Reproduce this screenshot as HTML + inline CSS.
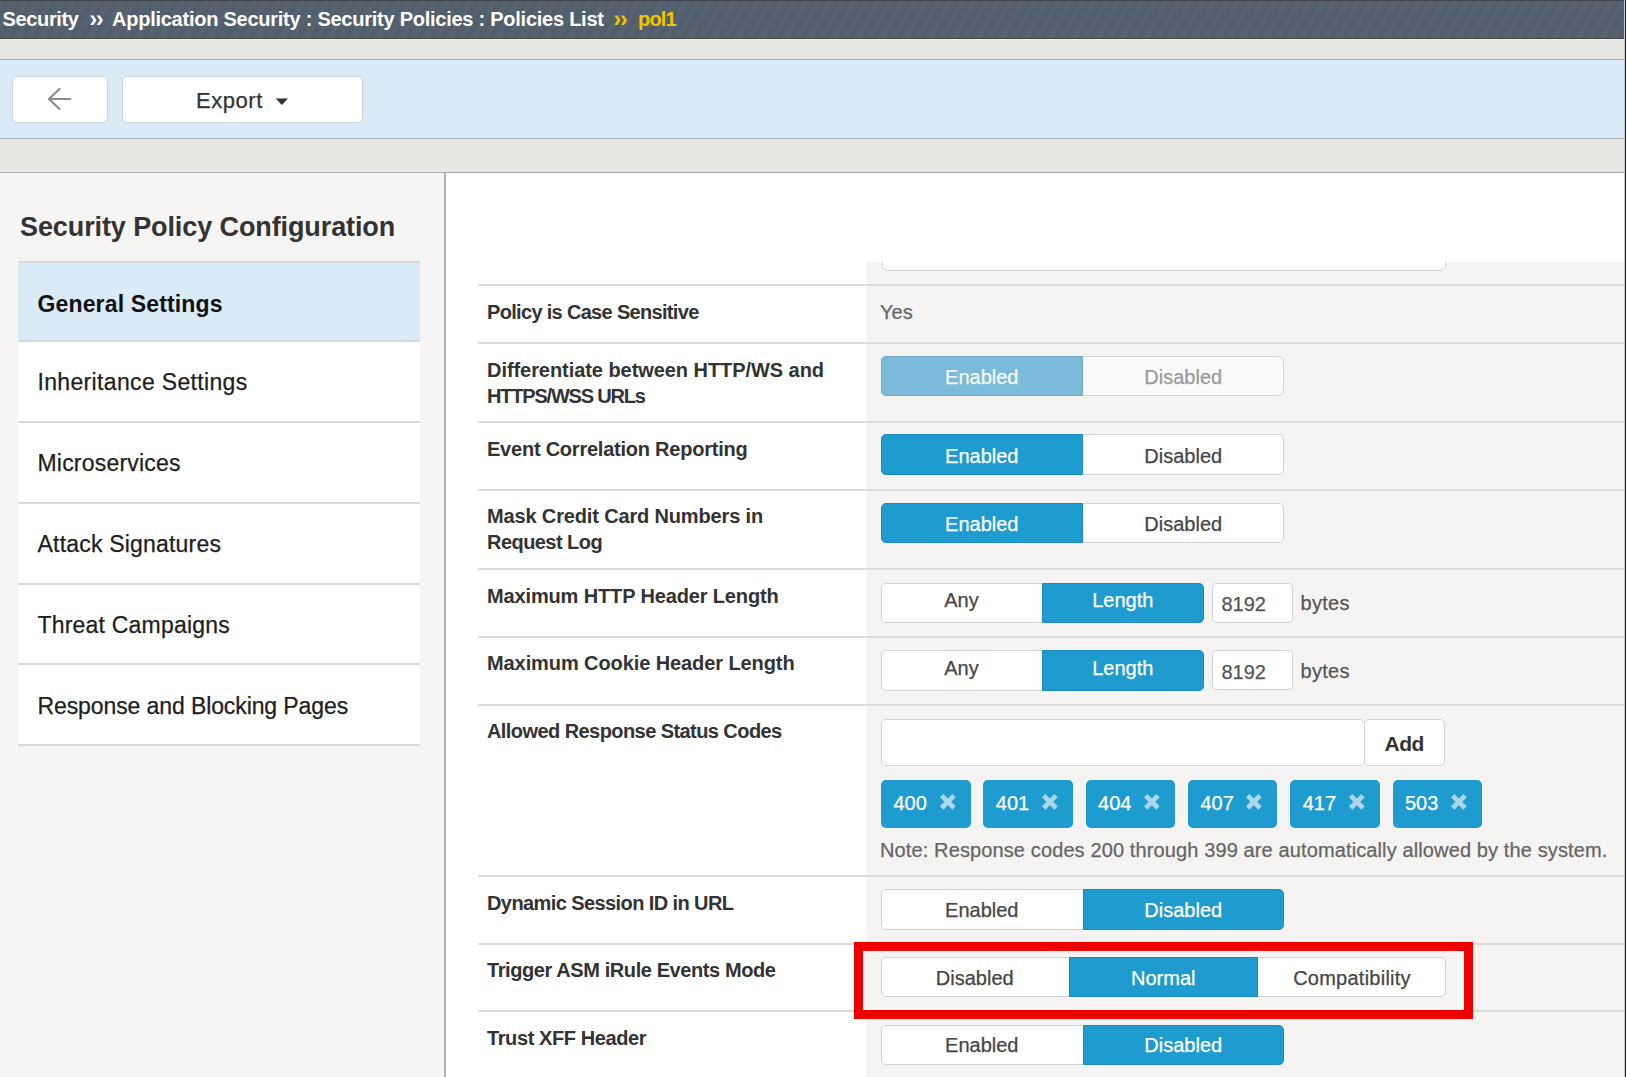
<!DOCTYPE html>
<html><head><meta charset="utf-8"><style>
html,body{margin:0;padding:0;}
body{width:1626px;height:1077px;overflow:hidden;position:relative;background:#fff;font-family:"Liberation Sans",sans-serif;}
.t{position:absolute;white-space:nowrap;line-height:1;}
.r{-webkit-text-stroke:0.25px currentColor;}
.b{position:absolute;box-sizing:border-box;}
</style></head><body>
<div class="b" style="left:0px;top:0px;width:1626.00px;height:39.00px;background:#525e6a;background-image:repeating-linear-gradient(120deg,rgba(255,255,255,0.028) 0px,rgba(255,255,255,0.028) 4px,rgba(0,0,0,0) 5px,rgba(0,0,0,0) 9.4px,rgba(255,255,255,0.028) 10.4px);border-top:1px solid #40464c;border-bottom:1.5px solid #3f4347;"></div>
<div class="t" style="left:2.5px;top:8.67px;font-size:20px;color:#fff;font-weight:700;letter-spacing:-0.35px;">Security</div>
<div class="t" style="left:89.5px;top:7.73px;font-size:23px;color:#fff;font-weight:700;letter-spacing:-1.2px;">&rsaquo;&rsaquo;</div>
<div class="t" id="bc2" style="left:112px;top:8.67px;font-size:20px;color:#fff;font-weight:700;letter-spacing:-0.25px;">Application Security : Security Policies : Policies List</div>
<div class="t" style="left:613.5px;top:7.73px;font-size:23px;color:#f5c400;font-weight:700;letter-spacing:-1.2px;">&rsaquo;&rsaquo;</div>
<div class="t" id="pol1" style="left:638px;top:8.67px;font-size:20px;color:#f5c400;font-weight:700;letter-spacing:-0.8px;">pol1</div>
<div class="b" style="left:0px;top:39px;width:1626.00px;height:21.00px;background:#e8e7e3;border-top:1px solid #f2f1ee;border-bottom:1.5px solid #a9aaab;"></div>
<div class="b" style="left:0px;top:60px;width:1626.00px;height:79.00px;background:#dbebf5;border-bottom:1.5px solid #a9b1b6;"></div>
<div class="b" style="left:11.5px;top:75.5px;width:96.00px;height:47.00px;background:#fff;border:1.5px solid #d2d4d6;border-radius:5px;"></div>
<svg class="b" style="left:40px;top:80px;" width="40" height="40" viewBox="0 0 40 40"><path d="M19.5 9 L9 19 L19.5 29 M9.3 19 L30.2 19" fill="none" stroke="#8c8c8c" stroke-width="2.2" stroke-linecap="round" stroke-linejoin="round"/></svg>
<div class="b" style="left:121.5px;top:75.5px;width:241.00px;height:47.00px;background:#fff;border:1.5px solid #d2d4d6;border-radius:5px;"></div>
<div class="t r" id="export" style="left:196px;top:89.68px;font-size:22px;color:#333;font-weight:400;letter-spacing:0.55px;">Export</div>
<svg class="b" style="left:274px;top:97px;" width="16" height="10" viewBox="0 0 16 10"><path d="M1.8 1.5 L14 1.5 L7.9 8 Z" fill="#333"/></svg>
<div class="b" style="left:0px;top:139px;width:1626.00px;height:34.00px;background:#e8e7e3;border-bottom:1.5px solid #a9aaab;"></div>
<div class="b" style="left:0px;top:173px;width:446.00px;height:904.00px;background:#f6f5f3;border-right:2px solid #b4b4b4;"></div>
<div class="t" id="spc" style="left:20px;top:213.74px;font-size:27px;color:#333;font-weight:700;letter-spacing:-0.1px;">Security Policy Configuration</div>
<div class="b" style="left:18px;top:262.15px;width:402.00px;height:78.90px;background:#dbebf5;"></div>
<div class="b" style="left:18px;top:341.05px;width:402.00px;height:80.95px;background:#fff;"></div>
<div class="b" style="left:18px;top:422px;width:402.00px;height:80.75px;background:#fff;"></div>
<div class="b" style="left:18px;top:502.75px;width:402.00px;height:80.75px;background:#fff;"></div>
<div class="b" style="left:18px;top:583.5px;width:402.00px;height:80.75px;background:#fff;"></div>
<div class="b" style="left:18px;top:664.25px;width:402.00px;height:80.75px;background:#fff;"></div>
<div class="b" style="left:18px;top:261.15px;width:402.00px;height:2.00px;background:#d8d9db;"></div>
<div class="b" style="left:18px;top:340.05px;width:402.00px;height:2.00px;background:#d8d9db;"></div>
<div class="b" style="left:18px;top:421px;width:402.00px;height:2.00px;background:#d8d9db;"></div>
<div class="b" style="left:18px;top:501.75px;width:402.00px;height:2.00px;background:#d8d9db;"></div>
<div class="b" style="left:18px;top:582.5px;width:402.00px;height:2.00px;background:#d8d9db;"></div>
<div class="b" style="left:18px;top:663.25px;width:402.00px;height:2.00px;background:#d8d9db;"></div>
<div class="b" style="left:18px;top:744px;width:402.00px;height:2.00px;background:#d8d9db;"></div>
<div class="t" id="nav0" style="left:37.5px;top:292.88px;font-size:23px;color:#111;font-weight:700;letter-spacing:0.15px;">General Settings</div>
<div class="t r" id="nav1" style="left:37.5px;top:371.38px;font-size:23px;color:#1e1e1e;font-weight:400;letter-spacing:0.34px;">Inheritance Settings</div>
<div class="t r" id="nav2" style="left:37.5px;top:452.33px;font-size:23px;color:#1e1e1e;font-weight:400;letter-spacing:0.2px;">Microservices</div>
<div class="t r" id="nav3" style="left:37.5px;top:533.08px;font-size:23px;color:#1e1e1e;font-weight:400;letter-spacing:0.2px;">Attack Signatures</div>
<div class="t r" id="nav4" style="left:37.5px;top:613.83px;font-size:23px;color:#1e1e1e;font-weight:400;letter-spacing:0.2px;">Threat Campaigns</div>
<div class="t r" id="nav5" style="left:37.5px;top:694.58px;font-size:23px;color:#1e1e1e;font-weight:400;letter-spacing:-0.1px;">Response and Blocking Pages</div>
<div class="b" style="left:866px;top:262px;width:760.00px;height:815.00px;background:#f5f4f2;"></div>
<div class="b" style="left:866px;top:262px;width:760px;height:20px;overflow:hidden;"><div class="b" style="left:16px;top:-30px;width:564px;height:38.5px;background:#fff;border:1.5px solid #d5d5d5;border-radius:6px;"></div></div>
<div class="b" style="left:478px;top:283.6px;width:1148.00px;height:2.00px;background:#dcdcdc;"></div>
<div class="b" style="left:478px;top:342px;width:1148.00px;height:2.00px;background:#dcdcdc;"></div>
<div class="b" style="left:478px;top:421px;width:1148.00px;height:2.00px;background:#dcdcdc;"></div>
<div class="b" style="left:478px;top:488.7px;width:1148.00px;height:2.00px;background:#dcdcdc;"></div>
<div class="b" style="left:478px;top:568px;width:1148.00px;height:2.00px;background:#dcdcdc;"></div>
<div class="b" style="left:478px;top:635.7px;width:1148.00px;height:2.00px;background:#dcdcdc;"></div>
<div class="b" style="left:478px;top:703.6px;width:1148.00px;height:2.00px;background:#dcdcdc;"></div>
<div class="b" style="left:478px;top:875px;width:1148.00px;height:2.00px;background:#dcdcdc;"></div>
<div class="b" style="left:478px;top:942.5px;width:1148.00px;height:2.00px;background:#dcdcdc;"></div>
<div class="b" style="left:478px;top:1010.4px;width:1148.00px;height:2.00px;background:#dcdcdc;"></div>
<div class="t" id="l1" style="left:487px;top:301.77px;font-size:20px;color:#333;font-weight:700;letter-spacing:-0.68px;">Policy is Case Sensitive</div>
<div class="t" id="l2" style="left:487px;top:359.67px;font-size:20px;color:#333;font-weight:700;letter-spacing:-0.06px;">Differentiate between HTTP/WS and</div>
<div class="t" id="l3" style="left:487px;top:385.77px;font-size:20px;color:#333;font-weight:700;letter-spacing:-1.2px;">HTTPS/WSS URLs</div>
<div class="t" id="l4" style="left:487px;top:438.57px;font-size:20px;color:#333;font-weight:700;letter-spacing:-0.23px;">Event Correlation Reporting</div>
<div class="t" id="l5" style="left:487px;top:506.37px;font-size:20px;color:#333;font-weight:700;letter-spacing:-0.15px;">Mask Credit Card Numbers in</div>
<div class="t" id="l6" style="left:487px;top:532.37px;font-size:20px;color:#333;font-weight:700;letter-spacing:-0.55px;">Request Log</div>
<div class="t" id="l7" style="left:487px;top:585.57px;font-size:20px;color:#333;font-weight:700;letter-spacing:-0.14px;">Maximum HTTP Header Length</div>
<div class="t" id="l8" style="left:487px;top:653.37px;font-size:20px;color:#333;font-weight:700;letter-spacing:-0.09px;">Maximum Cookie Header Length</div>
<div class="t" id="l9" style="left:487px;top:721.37px;font-size:20px;color:#333;font-weight:700;letter-spacing:-0.57px;">Allowed Response Status Codes</div>
<div class="t" id="l10" style="left:487px;top:892.77px;font-size:20px;color:#333;font-weight:700;letter-spacing:-0.59px;">Dynamic Session ID in URL</div>
<div class="t" id="l11" style="left:487px;top:959.97px;font-size:20px;color:#333;font-weight:700;letter-spacing:-0.41px;">Trigger ASM iRule Events Mode</div>
<div class="t" id="l12" style="left:487px;top:1027.67px;font-size:20px;color:#333;font-weight:700;letter-spacing:-0.4px;">Trust XFF Header</div>
<div class="t r" style="left:880px;top:301.77px;font-size:20px;color:#666;font-weight:400;">Yes</div>
<div class="b" style="left:881px;top:355.7px;width:403.00px;height:40.20px;background:#fafafa;border:1.5px solid #d3d3d3;border-radius:5px;"></div>
<div class="b" style="left:881px;top:355.7px;width:201.50px;height:40.20px;background:#7bbad9;border:1.5px solid #6eaac8;border-radius:5px 0 0 5px;"></div>
<div class="t r" style="left:681.75px;width:600px;text-align:center;top:367.07px;font-size:20px;color:#f4f9fc;font-weight:400;">Enabled</div>
<div class="t r" style="left:883.25px;width:600px;text-align:center;top:367.07px;font-size:20px;color:#9a9a9a;font-weight:400;">Disabled</div>
<div class="b" style="left:881px;top:434.4px;width:403.00px;height:40.20px;background:#fff;border:1.5px solid #d3d3d3;border-radius:5px;"></div>
<div class="b" style="left:881px;top:434.4px;width:201.50px;height:40.20px;background:#1e9bcf;border:1.5px solid #1a8cbd;border-radius:5px 0 0 5px;"></div>
<div class="t r" style="left:681.75px;width:600px;text-align:center;top:446.07px;font-size:20px;color:#fff;font-weight:400;">Enabled</div>
<div class="t r" style="left:883.25px;width:600px;text-align:center;top:446.07px;font-size:20px;color:#464646;font-weight:400;">Disabled</div>
<div class="b" style="left:881px;top:503px;width:403.00px;height:40.20px;background:#fff;border:1.5px solid #d3d3d3;border-radius:5px;"></div>
<div class="b" style="left:881px;top:503px;width:201.50px;height:40.20px;background:#1e9bcf;border:1.5px solid #1a8cbd;border-radius:5px 0 0 5px;"></div>
<div class="t r" style="left:681.75px;width:600px;text-align:center;top:514.07px;font-size:20px;color:#fff;font-weight:400;">Enabled</div>
<div class="t r" style="left:883.25px;width:600px;text-align:center;top:514.07px;font-size:20px;color:#464646;font-weight:400;">Disabled</div>
<div class="b" style="left:881px;top:582.5px;width:322.50px;height:40.20px;background:#fff;border:1.5px solid #d3d3d3;border-radius:5px;"></div>
<div class="t r" style="left:661.50px;width:600px;text-align:center;top:590.47px;font-size:20px;color:#464646;font-weight:400;">Any</div>
<div class="b" style="left:1042px;top:582.5px;width:161.50px;height:40.20px;background:#1e9bcf;border:1.5px solid #1a8cbd;border-radius:0 5px 5px 0;"></div>
<div class="t r" style="left:822.75px;width:600px;text-align:center;top:590.47px;font-size:20px;color:#fff;font-weight:400;">Length</div>
<div class="b" style="left:881px;top:650.4px;width:322.50px;height:40.20px;background:#fff;border:1.5px solid #d3d3d3;border-radius:5px;"></div>
<div class="t r" style="left:661.50px;width:600px;text-align:center;top:658.07px;font-size:20px;color:#464646;font-weight:400;">Any</div>
<div class="b" style="left:1042px;top:650.4px;width:161.50px;height:40.20px;background:#1e9bcf;border:1.5px solid #1a8cbd;border-radius:0 5px 5px 0;"></div>
<div class="t r" style="left:822.75px;width:600px;text-align:center;top:658.07px;font-size:20px;color:#fff;font-weight:400;">Length</div>
<div class="b" style="left:1212px;top:582.5px;width:81.00px;height:40.00px;background:#fff;border:1.5px solid #d3d3d3;border-radius:4px;"></div>
<div class="t r" style="left:1221.5px;top:594.07px;font-size:20px;color:#555;font-weight:400;">8192</div>
<div class="t r" style="left:1300.5px;top:593.07px;font-size:20px;color:#555;font-weight:400;letter-spacing:0.3px;">bytes</div>
<div class="b" style="left:1212px;top:650.4px;width:81.00px;height:40.00px;background:#fff;border:1.5px solid #d3d3d3;border-radius:4px;"></div>
<div class="t r" style="left:1221.5px;top:662.07px;font-size:20px;color:#555;font-weight:400;">8192</div>
<div class="t r" style="left:1300.5px;top:661.07px;font-size:20px;color:#555;font-weight:400;letter-spacing:0.3px;">bytes</div>
<div class="b" style="left:881px;top:718.8px;width:483.50px;height:47.70px;background:#fff;border:1.5px solid #d3d3d3;border-radius:5px;"></div>
<div class="b" style="left:1364px;top:718.8px;width:81.00px;height:47.70px;background:#fff;border:1.5px solid #d3d3d3;border-radius:5px;"></div>
<div class="t" style="left:1104.20px;width:600px;text-align:center;top:732.52px;font-size:21px;color:#333;font-weight:700;letter-spacing:-0.4px;">Add</div>
<div class="b" style="left:881px;top:779.5px;width:89.50px;height:48.70px;background:#1e9bcf;border-radius:5px;"></div>
<div class="t r" style="left:893.5px;top:793.07px;font-size:20px;color:#fff;font-weight:400;">400</div>
<svg class="b" style="left:938.5px;top:793.4px;" width="18" height="18" viewBox="0 0 18 18"><path d="M2.67 2.67 L15.03 15.03 M15.03 2.67 L2.67 15.03" stroke="#acd6ea" stroke-width="4.8" stroke-linecap="butt"/></svg>
<div class="b" style="left:983.3px;top:779.5px;width:89.50px;height:48.70px;background:#1e9bcf;border-radius:5px;"></div>
<div class="t r" style="left:995.8px;top:793.07px;font-size:20px;color:#fff;font-weight:400;">401</div>
<svg class="b" style="left:1040.8px;top:793.4px;" width="18" height="18" viewBox="0 0 18 18"><path d="M2.67 2.67 L15.03 15.03 M15.03 2.67 L2.67 15.03" stroke="#acd6ea" stroke-width="4.8" stroke-linecap="butt"/></svg>
<div class="b" style="left:1085.6px;top:779.5px;width:89.50px;height:48.70px;background:#1e9bcf;border-radius:5px;"></div>
<div class="t r" style="left:1098.1px;top:793.07px;font-size:20px;color:#fff;font-weight:400;">404</div>
<svg class="b" style="left:1143.1px;top:793.4px;" width="18" height="18" viewBox="0 0 18 18"><path d="M2.67 2.67 L15.03 15.03 M15.03 2.67 L2.67 15.03" stroke="#acd6ea" stroke-width="4.8" stroke-linecap="butt"/></svg>
<div class="b" style="left:1187.9px;top:779.5px;width:89.50px;height:48.70px;background:#1e9bcf;border-radius:5px;"></div>
<div class="t r" style="left:1200.4px;top:793.07px;font-size:20px;color:#fff;font-weight:400;">407</div>
<svg class="b" style="left:1245.4px;top:793.4px;" width="18" height="18" viewBox="0 0 18 18"><path d="M2.67 2.67 L15.03 15.03 M15.03 2.67 L2.67 15.03" stroke="#acd6ea" stroke-width="4.8" stroke-linecap="butt"/></svg>
<div class="b" style="left:1290.2px;top:779.5px;width:89.50px;height:48.70px;background:#1e9bcf;border-radius:5px;"></div>
<div class="t r" style="left:1302.7px;top:793.07px;font-size:20px;color:#fff;font-weight:400;">417</div>
<svg class="b" style="left:1347.7px;top:793.4px;" width="18" height="18" viewBox="0 0 18 18"><path d="M2.67 2.67 L15.03 15.03 M15.03 2.67 L2.67 15.03" stroke="#acd6ea" stroke-width="4.8" stroke-linecap="butt"/></svg>
<div class="b" style="left:1392.5px;top:779.5px;width:89.50px;height:48.70px;background:#1e9bcf;border-radius:5px;"></div>
<div class="t r" style="left:1405.0px;top:793.07px;font-size:20px;color:#fff;font-weight:400;">503</div>
<svg class="b" style="left:1450.0px;top:793.4px;" width="18" height="18" viewBox="0 0 18 18"><path d="M2.67 2.67 L15.03 15.03 M15.03 2.67 L2.67 15.03" stroke="#acd6ea" stroke-width="4.8" stroke-linecap="butt"/></svg>
<div class="t r" id="note" style="left:880px;top:839.57px;font-size:20px;color:#666;font-weight:400;letter-spacing:0.12px;">Note: Response codes 200 through 399 are automatically allowed by the system.</div>
<div class="b" style="left:881px;top:889.4px;width:403.00px;height:40.20px;background:#fff;border:1.5px solid #d3d3d3;border-radius:5px;"></div>
<div class="t r" style="left:681.75px;width:600px;text-align:center;top:899.87px;font-size:20px;color:#464646;font-weight:400;">Enabled</div>
<div class="b" style="left:1082.5px;top:889.4px;width:201.50px;height:40.20px;background:#1e9bcf;border:1.5px solid #1a8cbd;border-radius:0 5px 5px 0;"></div>
<div class="t r" style="left:883.25px;width:600px;text-align:center;top:899.87px;font-size:20px;color:#fff;font-weight:400;">Disabled</div>
<div class="b" style="left:854px;top:942px;width:618.50px;height:76.70px;background:#f5f4f2;"></div>
<div class="b" style="left:881px;top:957.3px;width:565.00px;height:40.20px;background:#fff;border:1.5px solid #d3d3d3;border-radius:5px;"></div>
<div class="t r" style="left:674.75px;width:600px;text-align:center;top:967.57px;font-size:20px;color:#464646;font-weight:400;">Disabled</div>
<div class="b" style="left:1068.5px;top:957.3px;width:189.50px;height:40.20px;background:#1e9bcf;border:1.5px solid #1a8cbd;"></div>
<div class="t r" style="left:863.25px;width:600px;text-align:center;top:967.57px;font-size:20px;color:#fff;font-weight:400;">Normal</div>
<div class="t r" style="left:1052.00px;width:600px;text-align:center;top:967.57px;font-size:20px;color:#464646;font-weight:400;letter-spacing:0.25px;">Compatibility</div>
<div class="b" style="left:881px;top:1025px;width:403.00px;height:40.20px;background:#fff;border:1.5px solid #d3d3d3;border-radius:5px;"></div>
<div class="t r" style="left:681.75px;width:600px;text-align:center;top:1035.37px;font-size:20px;color:#464646;font-weight:400;">Enabled</div>
<div class="b" style="left:1082.5px;top:1025px;width:201.50px;height:40.20px;background:#1e9bcf;border:1.5px solid #1a8cbd;border-radius:0 5px 5px 0;"></div>
<div class="t r" style="left:883.25px;width:600px;text-align:center;top:1035.37px;font-size:20px;color:#fff;font-weight:400;">Disabled</div>
<div class="b" style="left:854px;top:942px;width:618.50px;height:76.70px;border:9.6px solid #ee0000;"></div>
<div class="b" style="left:1624px;top:0px;width:1.00px;height:1077.00px;background:#c8c8c8;"></div>
<div class="b" style="left:1625px;top:0px;width:1.00px;height:1077.00px;background:#242424;"></div>
</body></html>
